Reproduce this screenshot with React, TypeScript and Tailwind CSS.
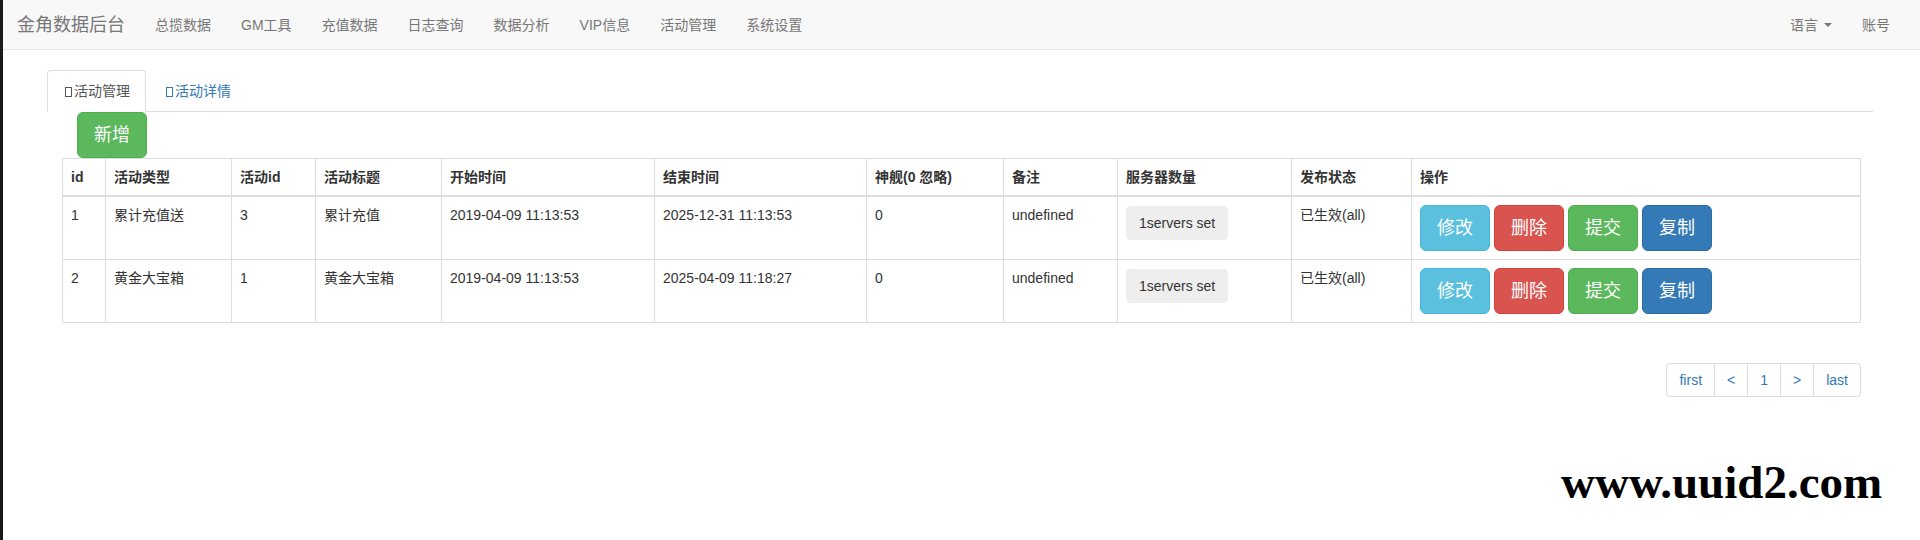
import React from 'react';

interface Activity {
  id: number;
  type: string;
  activityId: number;
  title: string;
  start: string;
  end: string;
  ship: number;
  note: string;
  servers: string;
  status: string;
}

const rows: Activity[] = [
  {
    id: 1,
    type: '累计充值送',
    activityId: 3,
    title: '累计充值',
    start: '2019-04-09 11:13:53',
    end: '2025-12-31 11:13:53',
    ship: 0,
    note: 'undefined',
    servers: '1servers set',
    status: '已生效(all)',
  },
  {
    id: 2,
    type: '黄金大宝箱',
    activityId: 1,
    title: '黄金大宝箱',
    start: '2019-04-09 11:13:53',
    end: '2025-04-09 11:18:27',
    ship: 0,
    note: 'undefined',
    servers: '1servers set',
    status: '已生效(all)',
  },
];

const navItems = ['总揽数据', 'GM工具', '充值数据', '日志查询', '数据分析', 'VIP信息', '活动管理', '系统设置'];

const headers = [
  { label: 'id', w: 'w-[43px]' },
  { label: '活动类型', w: 'w-[126px]' },
  { label: '活动id', w: 'w-[84px]' },
  { label: '活动标题', w: 'w-[126px]' },
  { label: '开始时间', w: 'w-[213px]' },
  { label: '结束时间', w: 'w-[212px]' },
  { label: '神舰(0 忽略)', w: 'w-[137px]' },
  { label: '备注', w: 'w-[114px]' },
  { label: '服务器数量', w: 'w-[174px]' },
  { label: '发布状态', w: 'w-[120px]' },
  { label: '操作', w: '' },
];

// missing glyphicon renders as an empty box
const Tofu = () => (
  <span className="inline-block w-[7px] h-[10px] border border-current mr-[2px] ml-[2px] align-[-1px]" />
);

const App: React.FC = () => {
  return (
    <div className="min-h-[540px] bg-white border-l-[3px] border-[#1a1a1a] font-['Liberation_Sans','Noto_Sans_CJK_SC',sans-serif] text-[14px] leading-[20px] text-[#333] relative">
      {/* Navbar */}
      <div className="h-[50px] bg-[#f8f8f8] border-b border-[#e7e7e7] flex items-center justify-between">
        <div className="flex items-center">
          <span className="pl-[14px] pr-[15px] text-[18px] leading-[20px] text-[#777]">金角数据后台</span>
          <ul className="flex">
            {navItems.map((item) => (
              <li key={item} className="px-[15px] text-[#777]">
                {item}
              </li>
            ))}
          </ul>
        </div>
        <ul className="flex pr-[15px]">
          <li className="px-[15px] text-[#777] flex items-center">
            语言
            <span className="inline-block ml-[6px] w-0 h-0 border-t-[4px] border-t-[#777] border-x-[4px] border-x-transparent" />
          </li>
          <li className="px-[15px] text-[#777]">账号</li>
        </ul>
      </div>

      {/* Content */}
      <div className="pl-[44px] pr-[47px] pt-[20px]">
        <ul className="flex border-b border-[#ddd]">
          <li className="-mb-px mr-[2px]">
            <div className="px-[15px] py-[10px] border border-[#ddd] border-b-transparent rounded-t-[4px] bg-white text-[#555]">
              <Tofu />
              活动管理
            </div>
          </li>
          <li className="-mb-px mr-[2px]">
            <div className="px-[15px] py-[10px] border border-transparent text-[#337ab7]">
              <Tofu />
              活动详情
            </div>
          </li>
        </ul>

        <div className="pl-[15px] pr-[12px]">
          <button className="ml-[15px] px-[16px] py-[10px] text-[18px] leading-[24px] text-white bg-[#5cb85c] border border-[#4cae4c] rounded-[6px]">
            新增
          </button>

          <table className="w-full table-fixed border-collapse border border-[#ddd]">
            <thead>
              <tr>
                {headers.map((h) => (
                  <th
                    key={h.label}
                    className={`${h.w} p-[8px] text-left font-bold align-bottom border border-[#ddd] border-b-2`}
                  >
                    {h.label}
                  </th>
                ))}
              </tr>
            </thead>
            <tbody>
              {rows.map((r) => (
                <tr key={r.id}>
                  <td className="p-[8px] align-top border border-[#ddd]">{r.id}</td>
                  <td className="p-[8px] align-top border border-[#ddd]">{r.type}</td>
                  <td className="p-[8px] align-top border border-[#ddd]">{r.activityId}</td>
                  <td className="p-[8px] align-top border border-[#ddd]">{r.title}</td>
                  <td className="p-[8px] align-top border border-[#ddd]">{r.start}</td>
                  <td className="p-[8px] align-top border border-[#ddd]">{r.end}</td>
                  <td className="p-[8px] align-top border border-[#ddd]">{r.ship}</td>
                  <td className="p-[8px] align-top border border-[#ddd]">{r.note}</td>
                  <td className="p-[8px] align-top border border-[#ddd]">
                    <span className="inline-block mt-[1px] px-[12px] py-[6px] bg-[#eee] border border-[#eee] rounded-[4px] text-[#333]">
                      {r.servers}
                    </span>
                  </td>
                  <td className="p-[8px] align-top border border-[#ddd]">{r.status}</td>
                  <td className="p-[8px] align-top border border-[#ddd]">
                    <div className="flex gap-[4px]">
                      <button className="px-[16px] py-[10px] text-[18px] leading-[24px] text-white bg-[#5bc0de] border border-[#46b8da] rounded-[6px]">
                        修改
                      </button>
                      <button className="px-[16px] py-[10px] text-[18px] leading-[24px] text-white bg-[#d9534f] border border-[#d43f3a] rounded-[6px]">
                        删除
                      </button>
                      <button className="px-[16px] py-[10px] text-[18px] leading-[24px] text-white bg-[#5cb85c] border border-[#4cae4c] rounded-[6px]">
                        提交
                      </button>
                      <button className="px-[16px] py-[10px] text-[18px] leading-[24px] text-white bg-[#337ab7] border border-[#2e6da4] rounded-[6px]">
                        复制
                      </button>
                    </div>
                  </td>
                </tr>
              ))}
            </tbody>
          </table>

          {/* Pagination */}
          <div className="flex justify-end mt-[40px]">
            <ul className="flex text-[#337ab7]">
              <li className="px-[12px] py-[6px] border border-[#ddd] rounded-l-[4px]">first</li>
              <li className="-ml-px px-[12px] py-[6px] border border-[#ddd]">&lt;</li>
              <li className="-ml-px px-[12px] py-[6px] border border-[#ddd]">1</li>
              <li className="-ml-px px-[12px] py-[6px] border border-[#ddd]">&gt;</li>
              <li className="-ml-px px-[12px] py-[6px] border border-[#ddd] rounded-r-[4px]">last</li>
            </ul>
          </div>
        </div>
      </div>

      {/* Watermark */}
      <div className="absolute left-[1558px] top-[455px] font-['Liberation_Serif',serif] font-bold text-[47px] leading-[54px] text-black">
        www.uuid2.com
      </div>
    </div>
  );
};

export default App;
